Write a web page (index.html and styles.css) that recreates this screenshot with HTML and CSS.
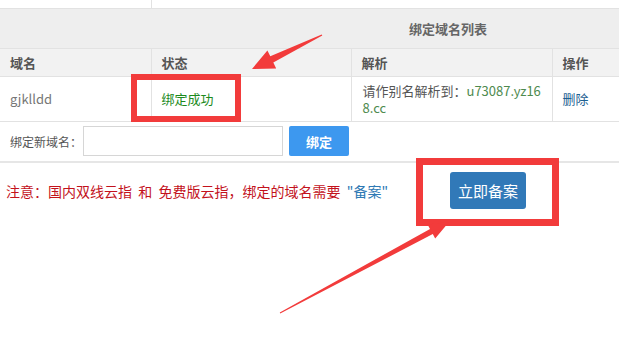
FILE: index.html
```html
<!DOCTYPE html>
<html lang="en">
<head>
    <meta charset="UTF-8">
    <meta name="viewport" content="width=device-width, initial-scale=1.0">
    <title>绑定域名列表</title>
    <link rel="stylesheet" href="styles.css">
</head>
<body>
    <div class="page">
        <table class="domains">
            <colgroup>
                <col class="col-name">
                <col class="col-status">
                <col class="col-dns">
                <col class="col-op">
            </colgroup>
            <tr class="top-row">
                <td class="first"></td>
                <td colspan="3"></td>
            </tr>
            <tr class="title-row">
                <th colspan="4" class="title">绑定域名列表</th>
            </tr>
            <tr class="head-row">
                <th>域名</th>
                <th>状态</th>
                <th>解析</th>
                <th>操作</th>
            </tr>
            <tr class="data-row">
                <td class="domain">gjklldd</td>
                <td class="status">绑定成功</td>
                <td class="dns">请作别名解析到：<span class="cname">u73087.yz168.cc</span></td>
                <td class="op"><a href="#" class="del">删除</a></td>
            </tr>
            <tr class="bind-row">
                <td colspan="4">
                    <div class="bind">
                        <label class="bind-label">绑定新域名：</label>
                        <input type="text" class="bind-input">
                        <button class="btn btn-bind">绑定</button>
                    </div>
                </td>
            </tr>
        </table>

        <div class="notice">
            <p class="notice-text">注意：国内双线云指&nbsp; 和&nbsp; 免费版云指，绑定的域名需要&nbsp; <span class="quote">"备案"</span></p>
            <button class="btn btn-record">立即备案</button>
        </div>

        <!-- screenshot annotations -->
        <svg class="marks" width="619" height="347" viewBox="0 0 619 347">
            <rect x="134" y="77" width="104" height="42" fill="none" stroke="#f23b3b" stroke-width="6"/>
            <rect x="419.5" y="161.5" width="136" height="61" fill="none" stroke="#f23b3b" stroke-width="7"/>
            <polygon fill="#f23b3b" points="321.7,34.4 270.3,56.3 267.4,50.4 252,69 276.2,68.4 273.3,62.6 322.3,35.6"/>
            <polygon fill="#f23b3b" points="279.8,312.6 430,228.9 427.6,224.5 449,222 435.2,238.5 432.8,234.1 280.2,313.4"/>
        </svg>
    </div>
</body>
</html>
```

FILE: styles.css
```css
* {
    margin: 0;
    padding: 0;
    box-sizing: border-box;
}

body {
    font-family: "Noto Sans CJK SC", "Noto Sans", sans-serif;
    font-size: 12px;
    color: #555;
    background-color: #fff;
    width: 619px;
    height: 347px;
    overflow: hidden;
}

.page {
    position: relative;
    width: 619px;
    height: 347px;
}

.domains {
    width: 619px;
    border-collapse: collapse;
    table-layout: fixed;
}

.domains td,
.domains th {
    border-top: 1px solid #e2e2e2;
    border-bottom: 1px solid #e2e2e2;
    text-align: left;
    font-weight: normal;
}

.col-name { width: 151px; }
.col-status { width: 200px; }
.col-dns { width: 201px; }
.col-op { width: 67px; }

.top-row td {
    height: 8px;
    border-top: none;
}

.top-row .first {
    border-right: 1px solid #e2e2e2;
}

.title-row th {
    height: 40px;
    background-color: #eeeeee;
    text-align: center;
    padding-left: 277px;
    font-weight: bold;
    color: #666;
    font-size: 13px;
}

.head-row th {
    height: 28px;
    background-color: #f2f2f2;
    font-weight: bold;
    font-size: 13px;
    color: #555;
    padding: 0 10px;
    border-left: 1px solid #e2e2e2;
}

.head-row th:first-child {
    border-left: none;
}

.data-row td {
    height: 45px;
    padding: 0 10px;
    border-left: 1px solid #e2e2e2;
    line-height: 17px;
    font-size: 13px;
}

.data-row td:first-child {
    border-left: none;
}

.domain {
    color: #777;
}

.status {
    color: #1c8a1c;
}

.data-row .dns {
    color: #555;
    word-break: break-all;
    padding: 0 3px 0 11px;
}

.cname {
    color: #4e8a4e;
}

.del {
    color: #1d5f91;
    text-decoration: none;
}

.bind-row td {
    height: 41px;
    border-bottom: 2px solid #e6e6e6;
}

.bind {
    display: flex;
    align-items: center;
    padding: 0 10px;
}

.bind-label {
    width: 73px;
    white-space: nowrap;
    color: #555;
    font-size: 12px;
}

.bind-input {
    width: 200px;
    height: 30px;
    border: 1px solid #d6d6d6;
    outline: none;
}

.btn {
    border: none;
    color: #fff;
    font-family: "Noto Sans CJK SC", sans-serif;
    cursor: pointer;
}

.btn-bind {
    width: 60px;
    height: 30px;
    margin-left: 6px;
    background-color: #3d98ef;
    font-weight: bold;
    font-size: 13px;
    border-radius: 2px;
}

.notice {
    display: flex;
    align-items: center;
    padding: 9px 6px 10px;
}

.notice-text {
    flex: none;
    width: 444px;
    color: #c3121c;
    font-size: 14px;
}

.quote {
    color: #2e79b4;
}

.btn-record {
    flex: none;
    width: 76px;
    height: 37px;
    background-color: #3179b8;
    font-size: 15px;
    border-radius: 3px;
}

.marks {
    position: absolute;
    left: 0;
    top: 0;
    pointer-events: none;
}
```
